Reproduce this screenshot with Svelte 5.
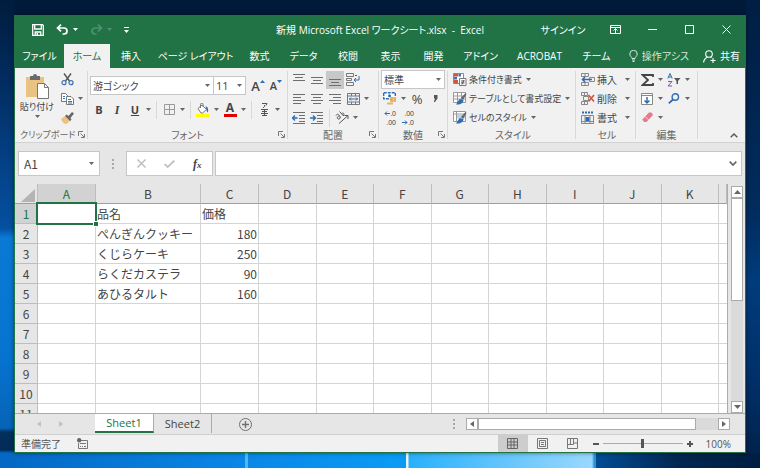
<script>
  const tabs = ['ファイル', 'ホーム', '挿入', 'ページ レイアウト', '数式', 'データ', '校閲', '表示', '開発', 'アドイン', 'ACROBAT', 'チーム'];
  const columns = ['A', 'B', 'C', 'D', 'E', 'F', 'G', 'H', 'I', 'J', 'K'];
  const data = {
    1: ['', '品名', '価格'],
    2: ['', 'ぺんぎんクッキー', 180],
    3: ['', 'くじらケーキ', 250],
    4: ['', 'らくだカステラ', 90],
    5: ['', 'あひるタルト', 160]
  };
  const rows = Array.from({ length: 11 }, (_, i) => i + 1);
  let zoom = $state(100);
</script>

{#snippet caret()}
  <svg class="caret" width="5" height="3" viewBox="0 0 5 3" aria-hidden="true"><path d="M0 0h5L2.5 3z" fill="currentColor" /></svg>
{/snippet}

{#snippet drop(label)}
  <button class="drop" aria-label={label}>{@render caret()}</button>
{/snippet}

{#snippet launcher(label)}
  <button class="launcher" aria-label={label}>
    <svg width="7" height="7" viewBox="0 0 7 7" fill="none" stroke="#777"><path d="M.5 5V.5H5M2.5 2.5 6 6M6.500 3v3.500H3" /></svg>
  </button>
{/snippet}

{#snippet lines(d)}
  <svg width="14" height="14" viewBox="0 0 14 14" fill="none" stroke="#6e6e6e" aria-hidden="true"><path {d} /></svg>
{/snippet}

<div class="desktop">
  <main class="window">
    <header class="titlebar">
      <div class="quick">
        <button aria-label="上書き保存">
          <svg width="12" height="12" viewBox="0 0 12 12" fill="none" stroke="#fff" stroke-width="1.300"><path d="M.7.700h9.800l.8.800v9.800H.7zM2.700.700v4.300h6.600V.700M3.200 11.300V8h5.600v3.300" /><path d="M4.500 9h1.500v2H4.500z" fill="#fff" stroke="none" /></svg>
        </button>
        <button aria-label="元に戻す">
          <svg width="13" height="11" viewBox="0 0 13 11" fill="none" stroke="#fff" stroke-width="1.700"><path d="M5 .6 1.500 4 5 7.400M1.500 4H8a3 3 0 0 1 0 6H6.500" /></svg>
          {@render caret()}
        </button>
        <button class="faded" aria-label="やり直し">
          <svg width="13" height="11" viewBox="0 0 13 11" fill="none" stroke="currentColor" stroke-width="1.700"><path d="M8 .6 11.500 4 8 7.400M11.500 4H5a3 3 0 0 0 0 6h1.500" /></svg>
          {@render caret()}
        </button>
        <button aria-label="クイック アクセス ツール バーのユーザー設定">
          <svg width="5" height="6" viewBox="0 0 5 6" fill="#fff"><path d="M0 0h5v1H0zM0 3h5L2.500 6z" /></svg>
        </button>
      </div>
      <h1>新規 Microsoft Excel ワークシート.xlsx&nbsp; -&nbsp; Excel</h1>
      <div class="controls">
        <button class="signin">サインイン</button>
        <button aria-label="リボンの表示オプション">
          <svg width="11" height="9" viewBox="0 0 11 9" fill="none" stroke="#fff"><path d="M.5.500h10v8H.5zM.5 2.500h10M5.500 8V4M3.500 5.500l2-2 2 2" /></svg>
        </button>
        <button aria-label="最小化"><svg width="9" height="9" viewBox="0 0 9 9" stroke="#fff"><path d="M0 4.500h9" /></svg></button>
        <button aria-label="最大化"><svg width="9" height="9" viewBox="0 0 9 9" fill="none" stroke="#fff"><path d="M.5.500h8v8h-8z" /></svg></button>
        <button aria-label="閉じる"><svg width="9" height="9" viewBox="0 0 9 9" stroke="#fff"><path d="m.5.500 8 8m0-8-8 8" /></svg></button>
      </div>
    </header>

    <nav class="tabs" aria-label="リボン">
      <div class="tablist">
        {#each tabs as tab}
          <button class:active={tab === 'ホーム'}>{tab}</button>
        {/each}
      </div>
      <button class="tell">
        <svg width="9" height="12" viewBox="0 0 9 12" fill="none" stroke="#d8e8de"><path d="M3 8.500C3 7 .8 6.300.8 4a3.700 3.700 0 0 1 7.400 0C8.200 6.300 6 7 6 8.500zM3 10h3M3.500 11.500h2" /></svg>
        操作アシス
      </button>
      <button class="share">
        <svg width="13" height="13" viewBox="0 0 13 13" fill="none" stroke="#fff" stroke-width="1.100"><circle cx="6" cy="4" r="3.300" /><path d="M.6 12.500C.8 9.500 2.500 8 4.300 7.200M7.500 7.200l1 .6M10 8v5M7.500 10.500h5" /></svg>
        共有
      </button>
    </nav>

    <section class="ribbon" aria-label="ホーム">
      <div class="group clipboard">
        <div class="body side">
          <button class="paste">
            <svg width="25" height="25" viewBox="0 0 25 25"><path d="M1 3h18v20H1z" fill="#eac282" /><path d="M5 2h3a2 2 0 0 1 4 0h3v4H5z" fill="#6a6a6a" /><path d="M12.500 9.500h7l4 4v11h-11z" fill="#fff" stroke="#777" /><path d="M19.500 9.500v4h4" fill="none" stroke="#777" /></svg>
            <span>貼り付け</span>
            {@render caret()}
          </button>
          <div class="rows">
            <div class="row"><button class="icon" aria-label="切り取り"><svg width="13" height="13" viewBox="0 0 13 13" fill="none"><path d="M3 .5 8.500 8M10 .5 4.500 8" stroke="#555" stroke-width="1.400" /><circle cx="3" cy="9.700" r="2" stroke="#3a73b5" stroke-width="1.200" /><circle cx="10" cy="9.700" r="2" stroke="#3a73b5" stroke-width="1.200" /></svg></button></div>
            <div class="row"><button class="icon" aria-label="コピー"><svg width="13" height="12" viewBox="0 0 13 12" fill="#fff" stroke="#777"><path d="M.5.500h4l2 2v6h-6z" /><path d="M5.500 3.500h4.500l2.500 2.500v5.500h-7z" /><path d="M2 3.500h2M2 5.500h2M7 6.500h3M7 8.500h4M7 10h4" stroke="#3a73b5" /></svg></button>{@render drop('コピーのオプション')}</div>
            <div class="row"><button class="icon" aria-label="書式のコピー"><svg width="13" height="12" viewBox="0 0 13 12"><path d="m0 7 4-3 5 5-3.500 3C3 12 1 10 0 7z" fill="#eac282" /><path d="M4 4l1.500-1.500 2 1.500L11 0l2 1.500L9.500 6l1 1.800L9 9z" fill="#666" /></svg></button></div>
          </div>
        </div>
        <div class="caption"><span>クリップボード</span>{@render launcher('クリップボードの設定')}</div>
      </div>

      <div class="group font">
        <div class="body two">
          <div class="row">
            <label class="combo grow"><select aria-label="フォント"><option>游ゴシック</option></select>{@render caret()}</label>
            <label class="combo size"><select aria-label="フォント サイズ"><option>11</option></select>{@render caret()}</label>
            <button class="icon big" aria-label="フォント サイズの拡大"><b>A</b><svg width="5" height="3" viewBox="0 0 5 3" fill="#2e6db4"><path d="M0 3 2.500 0 5 3z" /></svg></button>
            <button class="icon" aria-label="フォント サイズの縮小"><b>A</b><svg width="5" height="3" viewBox="0 0 5 3" fill="#2e6db4"><path d="M0 0h5L2.500 3z" /></svg></button>
          </div>
          <div class="row">
            <button class="icon letter">B</button>
            <button class="icon letter"><i>I</i></button>
            <button class="icon letter"><u>U</u></button>
            {@render drop('下線の種類')}
            <span class="bar"></span>
            <button class="icon" aria-label="罫線"><svg width="11" height="11" viewBox="0 0 11 11" fill="none" stroke="#9a9a9a"><path d="M.5.500h10v10H.5zM5.500.500v10M.5 5.500h10" /></svg></button>
            {@render drop('罫線の種類')}
            <span class="bar"></span>
            <button class="icon" aria-label="塗りつぶしの色"><svg width="14" height="14" viewBox="0 0 14 14"><path d="M2 5.500 6 2l4.500 4.500-4 3.500H5z" fill="#fff" stroke="#777" /><path d="M4.500 5V1.500a1.300 1.300 0 0 1 2.600 0V4" fill="none" stroke="#777" /><path d="M9.500 3.500c2.500 0 3 2.500 2.500 6-1.500-.5-1.500-3-1.500-3z" fill="#2e6db4" /><path d="M0 11h13v3H0z" fill="#ff0" /></svg></button>
            {@render drop('塗りつぶしの色の一覧')}
            <button class="icon fontcolor" aria-label="フォントの色">A</button>
            {@render drop('フォントの色の一覧')}
            <span class="bar"></span>
            <button class="icon phonetic" aria-label="ふりがなの表示"><svg width="9" height="13" viewBox="0 0 9 13" fill="none" stroke="#555"><path d="M2 .5h5l-1 2M4.500 2v1.500L3 5M1 6.500h7M2 8.500h5M1 10.500h7M4.500 6v6.500M2 12.500h5" /></svg></button>
            {@render drop('ふりがなの設定')}
          </div>
        </div>
        <div class="caption"><span>フォント</span>{@render launcher('フォントの設定')}</div>
      </div>

      <div class="group align">
        <div class="body rows">
          <div class="row">
            <button class="icon" aria-label="上揃え">{@render lines('M1 1.500h12M3 4.500h8M1 7.500h12')}</button>
            <button class="icon" aria-label="上下中央揃え">{@render lines('M1 4.500h12M3 7.500h8M1 10.500h12')}</button>
            <button class="icon pressed" aria-label="下揃え">{@render lines('M1 6.500h12M3 9.500h8M1 12.500h12')}</button>
            <button class="icon" aria-label="折り返して全体を表示する"><svg width="14" height="13" viewBox="0 0 14 13" fill="none" stroke="#777"><path d="M.5.500h7v3h-7zM.5 5.500h5v2h-5zM.5 9.500h7v3h-7z" /><path d="M9 2.500h2M13 3v4H8M10 5 8 7l2 2" stroke="#2e6db4" /></svg></button>
          </div>
          <div class="row">
            <button class="icon" aria-label="左揃え">{@render lines('M1 2.500h12M1 5.500h8M1 8.500h12M1 11.500h8')}</button>
            <button class="icon" aria-label="中央揃え">{@render lines('M1 2.500h12M3 5.500h8M1 8.500h12M3 11.500h8')}</button>
            <button class="icon" aria-label="右揃え">{@render lines('M1 2.500h12M5 5.500h8M1 8.500h12M5 11.500h8')}</button>
            <button class="icon" aria-label="セルを結合して中央揃え"><svg width="13" height="12" viewBox="0 0 13 12" fill="none" stroke="#777"><path d="M.5.500h12v11H.5zM.5 3h12M.5 9h12M4.500.500V3M8.500.500V3M4.500 9v2.500M8.500 9v2.500" /><path d="M2 6h9M4 4.500 2.500 6 4 7.500M9 4.500 10.500 6 9 7.500" stroke="#2e6db4" /></svg></button>
            {@render drop('結合のオプション')}
          </div>
          <div class="row">
            <button class="icon" aria-label="インデントを減らす"><svg width="14" height="12" viewBox="0 0 14 12" fill="none" stroke="#6e6e6e"><path d="M1 .5h12M7 3.500h6M7 6.500h6M7 9.500h6M1 11.500h12" /><path d="M.5 6h5M3 3.500.5 6 3 8.500" stroke="#2e6db4" stroke-width="1.400" /></svg></button>
            <button class="icon" aria-label="インデントを増やす"><svg width="14" height="12" viewBox="0 0 14 12" fill="none" stroke="#6e6e6e"><path d="M1 .5h12M7 3.500h6M7 6.500h6M7 9.500h6M1 11.500h12" /><path d="M0 6h5M3 3.500 5.500 6 3 8.500" stroke="#2e6db4" stroke-width="1.400" /></svg></button>
            <span class="bar"></span>
            <button class="icon" aria-label="方向"><svg width="14" height="13" viewBox="0 0 14 13" fill="none" stroke="#555"><path d="M4 12.500 12.500 5M9.500 4.500h3.500V8" /><path d="M1 4.500C2.500 2 4 3.500 5.500 6.500M4.500 5C2.500 5 1.500 7 3 8c1.500.500 2.500-1 2-2M4.500.5l4 4.500M6.500 2.500c2-1.500 3.500 1 1.500 2.500" /></svg></button>
            {@render drop('方向の一覧')}
          </div>
        </div>
        <div class="caption"><span>配置</span>{@render launcher('配置の設定')}</div>
      </div>

      <div class="group number">
        <div class="body rows">
          <div class="row"><label class="combo grow"><select aria-label="数値の書式"><option>標準</option></select>{@render caret()}</label></div>
          <div class="row">
            <button class="icon" aria-label="通貨表示形式"><svg width="14" height="13" viewBox="0 0 14 13"><path d="M.7.700h11.600v6H.7z" fill="#fff" stroke="#2e6db4" stroke-width="1.400" stroke-dasharray="3 1" /><circle cx="6.500" cy="3.700" r="1.500" fill="#2e6db4" /><path d="M7 5h6v2H7zM7 8h6v2H7zM4 10.500h6v2H4z" fill="#e9b665" /></svg></button>
            {@render drop('通貨の一覧')}
            <button class="icon percent">%</button>
            <button class="icon percent" aria-label="桁区切りスタイル"><svg width="5" height="7" viewBox="0 0 5 7" fill="#555"><path d="M1 0h3.500v3.500L2 7H.8L2 3.500H1z" /></svg></button>
          </div>
          <div class="row">
            <button class="icon decimals" aria-label="小数点以下の表示桁数を増やす">
              <span><svg width="6" height="5" viewBox="0 0 6 5" fill="none" stroke="#2e6db4"><path d="M6 2.500H1M3 .5l-2 2 2 2" /></svg>.0</span><span>.00</span>
            </button>
            <button class="icon decimals" aria-label="小数点以下の表示桁数を減らす">
              <span>.00</span><span><svg width="6" height="5" viewBox="0 0 6 5" fill="none" stroke="#2e6db4"><path d="M0 2.500h5M3 .5l2 2-2 2" /></svg>.0</span>
            </button>
          </div>
        </div>
        <div class="caption"><span>数値</span>{@render launcher('数値の設定')}</div>
      </div>

      <div class="group styles">
        <div class="body rows">
          <button class="row text"><svg width="14" height="13" viewBox="0 0 14 13"><path d="M.5.500h10v10H.5z" fill="#fff" stroke="#888" /><path d="M1 1h4v2.500H1zM1 7h4v3H1z" fill="#d2543c" /><path d="M5.500 1h2.500v2.500H5.500zM1 4h3v2.500H1z" fill="#3a73b5" /><path d="M6.500 5.500h6.500v7H6.500z" fill="#fff" stroke="#777" /><path d="M8 8h3.500M8 10h3.500M11 7l-2 4.500" stroke="#555" /></svg>条件付き書式{@render caret()}</button>
          <button class="row text"><svg width="14" height="13" viewBox="0 0 14 13"><path d="M.5.500h12v10H.5zM.5 4h12M.5 7h12M4.500.500v10M8.500.500v10" fill="#fff" stroke="#999" /><path d="M8 6 12.500 1l1 1L10 8z" fill="#666" /><path d="M3 12.500 6.500 7l4 1c0 3-3 5-7.500 4.500z" fill="#2e6db4" /></svg>テーブルとして書式設定{@render caret()}</button>
          <button class="row text"><svg width="14" height="13" viewBox="0 0 14 13"><path d="M.5.500h12v10H.5zM.5 3h12M3.500.500v10" fill="#fff" stroke="#999" /><path d="M4 3.500h8v4H4z" fill="#bcd3ec" /><path d="M8 6 12.500 1l1 1L10 8z" fill="#666" /><path d="M3 12.500 6.500 7l4 1c0 3-3 5-7.500 4.500z" fill="#2e6db4" /></svg>セルのスタイル{@render caret()}</button>
        </div>
        <div class="caption"><span>スタイル</span></div>
      </div>

      <div class="group cells">
        <div class="body rows">
          <button class="row text"><svg width="14" height="13" viewBox="0 0 14 13" fill="none" stroke="#888"><path d="M.5.500h7v3h-7zM.5 9.500h7v3h-7zM4 .5v3M4 9.500v3M8.500 4.500h5v4h-5z" /><path d="M1 6.500h10M4 4 1.500 6.500 4 9" stroke="#2e6db4" stroke-width="1.600" /></svg><span>挿入</span>{@render caret()}</button>
          <button class="row text"><svg width="14" height="13" viewBox="0 0 14 13" fill="none" stroke="#888"><path d="M.5.500h6v3h-6zM.5 9.500h6v3h-6zM3.500.500v3M3.500 9.500v3M2.500 4.500h5v4h-5z" /><path d="m7.500 3 5.500 6.500M13 3 7.500 9.500" stroke="#d2543c" stroke-width="1.600" /></svg><span>削除</span>{@render caret()}</button>
          <button class="row text"><svg width="14" height="13" viewBox="0 0 14 13" fill="none" stroke="#888"><path d="M1 1.500h11" stroke="#2e6db4" stroke-width="2" stroke-dasharray="2 1" /><path d="M.5 4.500h12v8H.5zM4 4.500v8M9 4.500v8M.5 10.500h12" /><path d="M4.500 6h4v4h-4z" fill="#2e6db4" stroke="none" /></svg><span>書式</span>{@render caret()}</button>
        </div>
        <div class="caption"><span>セル</span></div>
      </div>

      <div class="group edit">
        <div class="body rows">
          <div class="row">
            <button class="icon" aria-label="合計"><svg width="13" height="12" viewBox="0 0 13 12" fill="none" stroke="#444" stroke-width="1.800"><path d="M12 3V1H1.500L7 6l-5.500 5H12V9" /></svg></button>{@render drop('オート SUM')}
            <button class="icon" aria-label="並べ替えとフィルター"><svg width="14" height="14" viewBox="0 0 14 14" fill="none"><path d="M.8 5.500 3 .5l2.200 5M1.500 4h3" stroke="#2e6db4" /><path d="M1 8.500h4l-4 4.500h4" stroke="#8c4db0" /><path d="M7 5h6.500L11 8v3H9.500V8z" fill="#555" /></svg></button>{@render drop('並べ替え')}
          </div>
          <div class="row">
            <button class="icon" aria-label="フィル"><svg width="12" height="12" viewBox="0 0 12 12" fill="#fff" stroke="#888"><path d="M.5.500h11v11H.5zM.5 2.500h11" /><path d="M6 4v6M3.500 7.500 6 10l2.500-2.500" fill="none" stroke="#2e6db4" stroke-width="1.500" /></svg></button>{@render drop('フィルの一覧')}
            <button class="icon" aria-label="検索と選択"><svg width="12" height="11" viewBox="0 0 12 11" fill="none" stroke="#2e6db4" stroke-width="1.400"><circle cx="7.300" cy="4" r="3.200" /><path d="M5 6.500.8 10.300" stroke-width="1.800" /></svg></button>{@render drop('検索の一覧')}
          </div>
          <div class="row">
            <button class="icon" aria-label="クリア"><svg width="11" height="11" viewBox="0 0 11 11"><path d="M7 .5h2.500L11 3 4.500 10H2L.3 7.500z" fill="#e8798a" /><path d="m3 4.500 3.800 3.300" stroke="#f8d0d6" /></svg></button>{@render drop('クリアの一覧')}
          </div>
        </div>
        <div class="caption"><span>編集</span></div>
      </div>
      <button class="collapse" aria-label="リボンを折りたたむ"><svg width="8" height="5" viewBox="0 0 8 5" fill="none" stroke="#555" stroke-width="1.400"><path d="M.7 4.300 4 1l3.300 3.300" /></svg></button>
    </section>

    <section class="formula">
      <label class="namebox"><input value="A1" aria-label="名前ボックス" />{@render caret()}</label>
      <span class="dots"></span>
      <div class="fx">
        <button aria-label="キャンセル"><svg width="9" height="9" viewBox="0 0 9 9" stroke="#bbb" stroke-width="1.400"><path d="m.5.500 8 8m0-8-8 8" /></svg></button>
        <button aria-label="入力"><svg width="11" height="8" viewBox="0 0 11 8" fill="none" stroke="#bbb" stroke-width="1.700"><path d="m.7 4 3 3L10.300.700" /></svg></button>
        <button class="insert" aria-label="関数の挿入"><i>f</i><small>x</small></button>
      </div>
      <label class="entry"><input aria-label="数式バー" /><svg width="8" height="5" viewBox="0 0 8 5" fill="none" stroke="#666" stroke-width="1.700"><path d="M.7.700 4 4 7.300.700" /></svg></label>
    </section>

    <section class="sheet">
      <div class="grid">
        <table>
          <colgroup><col class="c-head" /><col class="c-a" /><col class="c-b" /><col class="c-a" />{#each columns.slice(3) as _}<col />{/each}<col class="c-rest" /></colgroup>
          <thead>
            <tr>
              <th class="corner" aria-label="すべて選択"><svg width="14" height="13" viewBox="0 0 14 13"><path d="M14 0v13H0z" fill="#b4b4b4" /></svg></th>
              {#each columns as c}<th class:sel={c === 'A'}>{c}</th>{/each}
              <th></th>
            </tr>
          </thead>
          <tbody>
            {#each rows as r}
              <tr>
                <th class:sel={r === 1}>{r}</th>
                {#each columns as c, i}
                  <td class:num={typeof data[r]?.[i] === 'number'} class:cursor={r === 1 && i === 0}>{data[r]?.[i] ?? ''}</td>
                {/each}
                <td></td>
              </tr>
            {/each}
          </tbody>
        </table>
      </div>
      <div class="vscroll">
        <button aria-label="上へ"><svg width="7" height="4" viewBox="0 0 7 4" fill="#666"><path d="M0 4 3.500 0 7 4z" /></svg></button>
        <div class="thumb"></div>
        <div class="space"></div>
        <button aria-label="下へ"><svg width="7" height="4" viewBox="0 0 7 4" fill="#666"><path d="M0 0h7L3.500 4z" /></svg></button>
      </div>
    </section>

    <section class="sheettabs">
      <div class="nav">
        <button aria-label="前のシート"><svg width="4" height="6" viewBox="0 0 4 6" fill="#c0c0c0"><path d="M4 0v6L0 3z" /></svg></button>
        <button aria-label="次のシート"><svg width="4" height="6" viewBox="0 0 4 6" fill="#c0c0c0"><path d="M0 0v6l4-3z" /></svg></button>
      </div>
      <button class="tab current">Sheet1</button>
      <button class="tab">Sheet2</button>
      <button class="add" aria-label="新しいシート"><svg width="13" height="13" viewBox="0 0 13 13" fill="none" stroke="#707070"><circle cx="6.500" cy="6.500" r="6" /><path d="M6.500 3v7M3 6.500h7" stroke-width="1.400" /></svg></button>
      <span class="dots"></span>
      <div class="hscroll">
        <button aria-label="左へ"><svg width="4" height="6" viewBox="0 0 4 6" fill="#666"><path d="M4 0v6L0 3z" /></svg></button>
        <div class="thumb"></div>
        <div class="space"></div>
        <button aria-label="右へ"><svg width="4" height="6" viewBox="0 0 4 6" fill="#666"><path d="M0 0v6l4-3z" /></svg></button>
      </div>
    </section>

    <footer class="status">
      <span>準備完了</span>
      <button class="macro" aria-label="マクロの記録"><svg width="11" height="11" viewBox="0 0 11 11" fill="none" stroke="#777"><path d="M4 2.500h6.500v8H1.500V5" /><circle cx="2.200" cy="2.200" r="2.200" fill="#666" stroke="none" /><path d="M3 5.500h6M3 8.500h1M5 8.500h1M7 8.500h2" /></svg></button>
      <div class="views">
        <button class="on" aria-label="標準"><svg width="11" height="11" viewBox="0 0 11 11" fill="none" stroke="#666"><path d="M.5.500h10v10H.5zM.5 4h10M.5 7h10M4 .5v10M7 .5v10" /></svg></button>
        <button aria-label="ページ レイアウト"><svg width="11" height="11" viewBox="0 0 11 11" fill="none" stroke="#777"><path d="M.5.500h10v10H.5zM2.500 2.500h6v6h-6zM4 4.500h3M4 6.500h3" /></svg></button>
        <button aria-label="改ページ プレビュー"><svg width="11" height="11" viewBox="0 0 11 11" fill="none" stroke="#777"><path d="M.5.500h10v10H.5zM.5 6.500h6v-6M3.500.500v6M6.500 5h4" /></svg></button>
      </div>
      <button class="step" aria-label="縮小"><svg width="6" height="6" viewBox="0 0 6 6" stroke="#555" stroke-width="2"><path d="M0 3h6" /></svg></button>
      <input class="zoom" type="range" min="0" max="200" bind:value={zoom} aria-label="ズーム" />
      <button class="step" aria-label="拡大"><svg width="6" height="6" viewBox="0 0 6 6" stroke="#555" stroke-width="2"><path d="M0 3h6M3 0v6" /></svg></button>
      <span class="level">{zoom}%</span>
    </footer>
  </main>
</div>

<style>
  :global(body) { margin: 0; }
  .desktop {
    box-sizing: border-box;
    height: 100vh;
    padding: 15px 14px;
    background:
      linear-gradient(90deg, #e8f6ff 0 2px, #29b1fb 3px, #9ad8fd 186px, #2b94d8 188px) 406px 100% / 190px 15px no-repeat,
      linear-gradient(#4fb8f5, #4fb8f5) 245px 100% / 3px 15px no-repeat,
      linear-gradient(90deg, #0468c4, #0a86e6 240px, #0a9cf4 400px, #014a92 600px, #002650 680px, #001d42) 0 100% / 100% 15px no-repeat,
      linear-gradient(#001e42, #012c5e 45%, #003c7c 60%, #00316a 80%, #002048) 100% 0 / 14px 100% no-repeat,
      linear-gradient(#011c3c, #022c60 80px, #044084 160px, #0550a0 228px, #0a7ad6 238px, #0673d0 360px, #0664b8 428px, #02305f 432px, #022b58 450px, #0468c4 453px) 0 0 / 14px 100% no-repeat,
      #011a3a;
    font: 10px/14px "Open Sans", "Noto Sans CJK JP", sans-serif;
    font-feature-settings: "palt";
    color: #444;
  }
  button, input, select { margin: 0; padding: 0; border: 0; background: none; color: inherit; font: inherit; font-feature-settings: inherit; border-radius: 0; outline: 0; }
  button { display: flex; align-items: center; justify-content: center; white-space: nowrap; }
  svg { display: block; flex: none; }
  .window { box-sizing: border-box; height: 100%; display: flex; flex-direction: column; border: 1px solid #217346; border-top: 0; background: #e6e6e6; box-shadow: 0 0 4px rgba(0, 0, 0, 0.5); overflow: hidden; }

  .titlebar { flex: none; display: grid; grid-template-columns: 1fr auto 1fr; align-items: center; height: 29px; background: #217346; color: #fff; }
  .quick { display: flex; gap: 12px; padding-left: 17px; }
  .quick button { gap: 4px; }
  .quick .faded { color: #4f9070; }
  h1 { margin: 0; font: inherit; white-space: nowrap; }
  .controls { display: flex; justify-content: flex-end; }
  .controls button { width: 37px; }
  .controls .signin { width: 68px; }

  .tabs { flex: none; display: flex; justify-content: space-between; height: 24px; background: #217346; color: #fff; }
  .tablist { display: grid; grid-template-columns: 49px 46px 42px 87px 41px 47px 42px 43px 43px 51px 67px 47px; }
  .tablist .active { background: #f1f1f1; color: #217346; }
  .tell, .share { gap: 4px; }
  .tell { color: #d8e8de; margin-left: auto; margin-right: 14px; }
  .share { margin-right: 5px; }

  .ribbon { flex: none; display: flex; height: 75px; background: #f1f1f1; border-bottom: 1px solid #d2d2d2; box-sizing: border-box; }
  .group { box-sizing: border-box; display: flex; flex-direction: column; padding: 2px 3px 0 2px; position: relative; }
  .group::after { content: ""; position: absolute; right: 0; top: 3px; bottom: 3px; width: 1px; background: #d8d8d8; }
  .clipboard { width: 73px; }
  .font { width: 200px; }
  .align { width: 91px; }
  .number { width: 69px; }
  .styles { width: 128px; padding-left: 5px; }
  .cells { width: 60px; padding-left: 5px; }
  .edit { width: 62px; }
  .body { height: 57px; }
  .rows { display: flex; flex-direction: column; }
  .row { display: flex; align-items: center; justify-content: flex-start; height: 19px; }
  .two { display: flex; flex-direction: column; gap: 5px; padding-top: 6px; box-sizing: border-box; }
  .side { display: flex; gap: 1px; }
  .paste { width: 40px; flex-direction: column; justify-content: flex-start; padding-top: 4px; }
  .paste span { font-size: 9px; line-height: 16px; }
  .caption { flex: 1; display: grid; grid-template-columns: 1fr; align-items: center; color: #666; }
  .caption > span { grid-area: 1 / 1; justify-self: center; white-space: nowrap; }
  .clipboard .caption > span { justify-self: start; padding-left: 3px; font-size: 9px; }
  .caption .launcher, .caption > :global(button) { grid-area: 1 / 1; justify-self: end; }
  .icon { width: 18px; height: 18px; flex: none; }
  .pressed { background: #c8c8c8; }
  .caret { color: #666; }
  .titlebar .caret { color: inherit; }
  .drop { width: 9px; height: 18px; flex: none; }
  .bar { width: 1px; height: 18px; margin: 0 3px; background: #d8d8d8; flex: none; }
  .letter { font-size: 11px; font-weight: 700; }
  .letter i { font-family: "Liberation Serif", serif; font-size: 12px; }
  .icon b { font-size: 11px; font-weight: 600; }
  .icon.big { margin-left: 3px; }
  .icon.big b { font-size: 13px; }
  .icon b + svg { align-self: flex-start; margin-top: 3px; }
  .fontcolor { flex-direction: column; font-size: 12px; font-weight: 700; line-height: 12px; }
  .fontcolor::after { content: ""; width: 13px; height: 3px; background: #e00000; }
  .percent { font-size: 13px; }
  .decimals { flex-direction: column; align-items: flex-end; font: 7px/9px "Liberation Sans", sans-serif; padding-right: 3px; }
  .decimals span { display: flex; align-items: center; }
  .text { gap: 2px; }
  .styles .text { font-size: 9px; }
  .text .caret { margin-left: 2px; }
  .cells .text .caret { margin-left: 6px; }
  .combo { display: grid; align-items: center; height: 19px; box-sizing: border-box; border: 1px solid #c6c6c6; background: #fff; }
  .combo select { grid-area: 1 / 1; appearance: none; height: 17px; padding-left: 2px; }
  .combo .caret { grid-area: 1 / 1; justify-self: end; margin-right: 3px; pointer-events: none; }
  .grow { flex: 1; }
  .size { width: 33px; margin-left: -1px; font-size: 11px; }
  .collapse { margin-left: auto; align-self: flex-end; width: 22px; height: 14px; }

  .formula { flex: none; display: flex; align-items: center; height: 41px; padding: 0 3px; gap: 2px; }
  .namebox, .fx, .entry { box-sizing: border-box; height: 25px; border: 1px solid #c6c6c6; background: #fff; display: flex; align-items: center; }
  .namebox { width: 82px; padding: 0 5px; font: 12px/18px "Noto Sans CJK JP", sans-serif; }
  .namebox input { flex: 1; min-width: 0; }
  .dots { width: 2px; height: 10px; margin: 0 10px; background: repeating-linear-gradient(#a8a8a8 0 2px, transparent 2px 4px); }
  .fx { width: 87px; padding: 0 1px; }
  .fx button { flex: 1; }
  .insert { font: 700 12px/16px "Liberation Serif", serif; }
  .insert small { font: italic 700 9px/16px "Liberation Serif", serif; padding-top: 3px; }
  .entry { flex: 1; padding: 0 4px; }
  .entry input { flex: 1; min-width: 0; font-size: 12px; }

  .sheet { flex: 1; min-height: 0; display: flex; }
  .grid { flex: 1; min-width: 0; overflow: hidden; background: #fff; border-right: 1px solid #ababab; }
  table { width: 100%; table-layout: fixed; border-collapse: separate; border-spacing: 0; font: 12px/16px "Noto Sans CJK JP", sans-serif; font-feature-settings: normal; }
  .c-head { width: 23px; }
  .c-a { width: 58px; }
  .c-b { width: 105px; }
  .c-rest { width: 8px; }
  th, td { box-sizing: border-box; height: 20px; padding: 0 1px; border-right: 1px solid #d4d4d4; border-bottom: 1px solid #d4d4d4; white-space: nowrap; position: relative; }
  th { background: #e6e6e6; font-weight: 400; color: #444; border-color: #bdbdbd; }
  thead th { border-bottom-color: #9f9f9f; }
  th.sel { background: #d2d2d2; color: #217346; }
  .corner { padding: 4px 2px 0 0; }
  .corner svg { margin-left: auto; }
  td:last-child { border-right: 0; }
  .num { text-align: right; }
  .cursor::before { content: ""; position: absolute; inset: -2px -2px -2px -2px; border: 2px solid #217346; z-index: 1; }
  .cursor::after { content: ""; position: absolute; right: -3px; bottom: -3px; width: 4px; height: 4px; background: #217346; outline: 1px solid #fff; z-index: 2; }

  .vscroll { width: 12px; margin: 2px 2px 0 3px; display: flex; flex-direction: column; background: #dadada; }
  .vscroll button, .hscroll button, .thumb { flex: none; box-sizing: border-box; border: 1px solid #ababab; background: #fff; }
  .vscroll button { height: 12px; }
  .vscroll .thumb { flex: 1 1 0; }
  .vscroll .space { flex: 1 1 0; }

  .sheettabs { flex: none; display: flex; align-items: flex-start; height: 22px; box-sizing: border-box; border-top: 1px solid #ababab; border-bottom: 1px solid #cfcfcf; font-size: 11px; }
  .nav { display: flex; gap: 18px; width: 58px; height: 20px; padding-left: 22px; }
  .tab { box-sizing: border-box; height: 19px; width: 58px; border-right: 1px solid #ababab; }
  .current { width: 59px; border-bottom: 2px solid #217346; background: #fff; color: #217346; }
  .add { width: 66px; height: 20px; }
  .sheettabs .dots { margin: 5px 11px 0 auto; }
  .hscroll { width: 264px; height: 12px; margin: 4px 15px 0 0; display: flex; background: #dadada; }
  .hscroll button { width: 12px; }
  .hscroll .thumb { flex: 1; }
  .hscroll .space { width: 22px; }

  .status { flex: none; display: flex; align-items: center; height: 17px; background: #f1f1f1; padding: 0 14px 0 6px; color: #555; }
  .macro { margin-left: 16px; }
  .views { display: flex; margin-left: auto; height: 17px; }
  .views button { width: 30px; }
  .views .on { background: #cdcdcd; }
  .step { width: 14px; height: 17px; }
  .views + .step { margin-left: 1px; }
  .zoom { appearance: none; width: 80px; height: 17px; background: linear-gradient(#aaa, #aaa) center / 100% 1px no-repeat; }
  .zoom::-webkit-slider-thumb { appearance: none; width: 3px; height: 9px; background: #555; }
  .level { margin-left: 9px; }
</style>
